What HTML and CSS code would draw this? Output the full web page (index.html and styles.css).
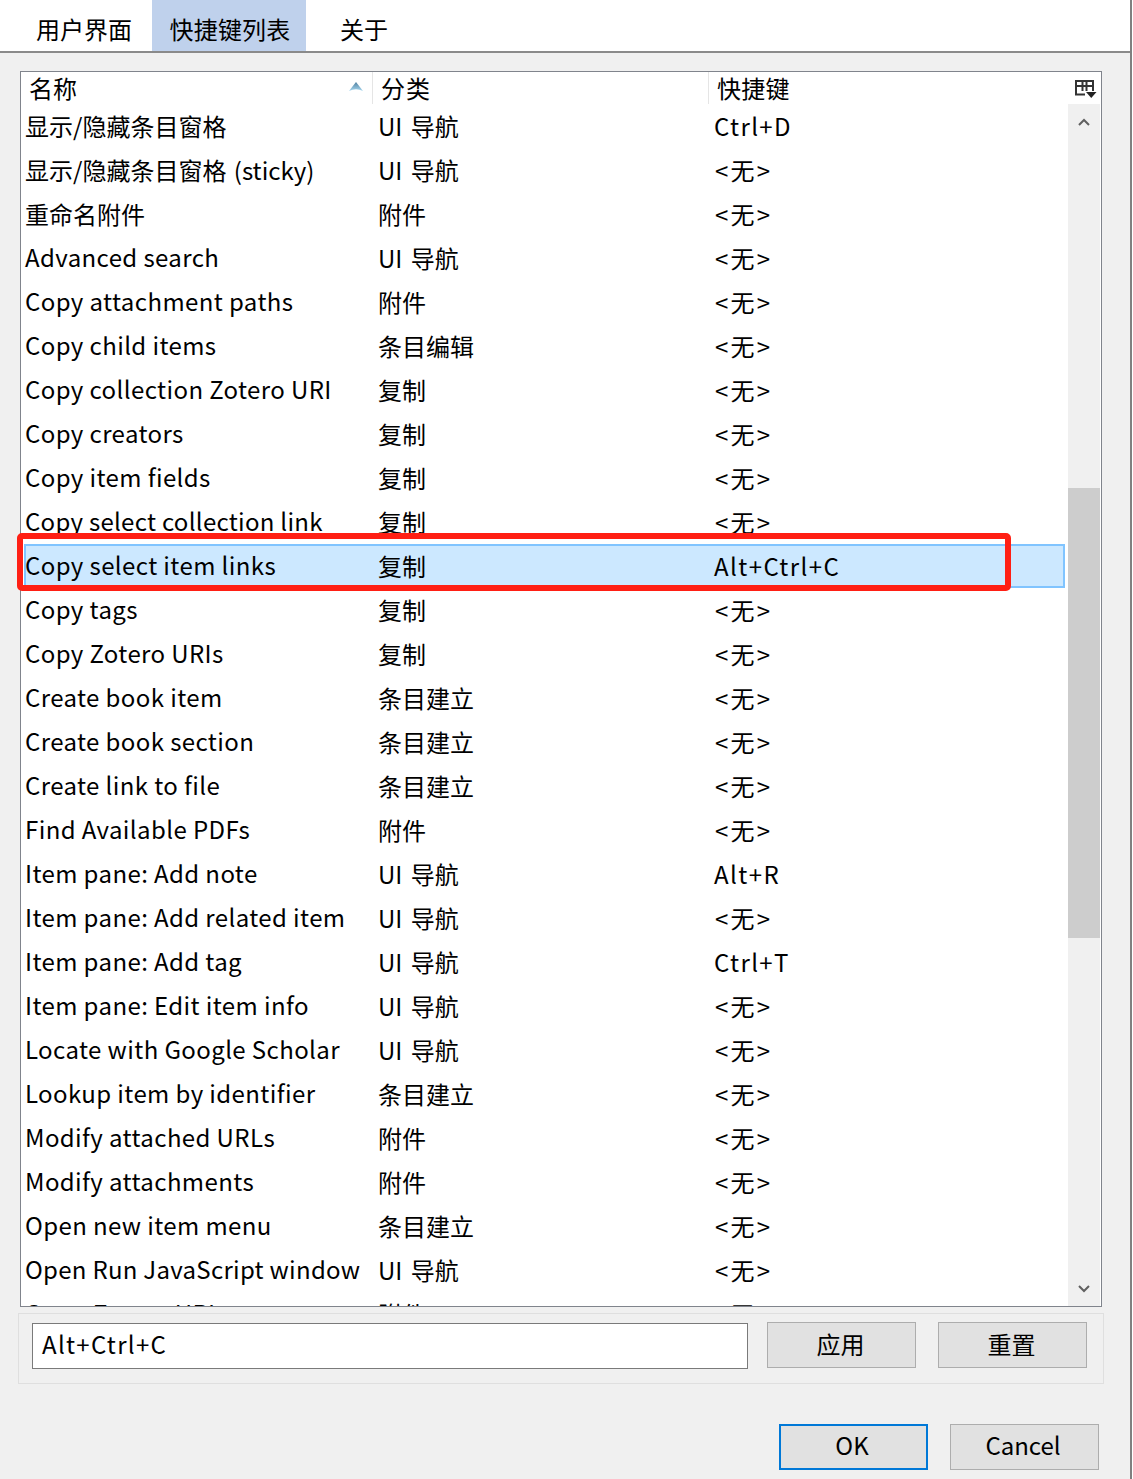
FILE: index.html
```html
<!DOCTYPE html>
<html lang="zh-CN">
<head>
<meta charset="utf-8">
<title>快捷键列表</title>
<link rel="stylesheet" href="styles.css">
</head>
<body>
<div class="app">
  <nav class="tabs">
    <div class="tab tab-first">用户界面</div>
    <div class="tab tab-active">快捷键列表</div>
    <div class="tab tab-last">关于</div>
  </nav>
  <main class="main">
    <section class="list">
      <div class="table">
        <div class="head">
          <div class="hcell hcell-name">名称
            <svg class="sort" width="14" height="9" viewBox="0 0 14 9"><defs><linearGradient id="sortfill" x1="0" y1="0" x2="0" y2="1"><stop offset="0" stop-color="#4f7f9f"/><stop offset="1" stop-color="#a8d8f0"/></linearGradient></defs><path d="M7 0 L14 9 Q7 5.500 0 9 Z" fill="url(#sortfill)"/></svg>
          </div>
          <div class="hcell hcell-cat">分类</div>
          <div class="hcell hcell-key">快捷键</div>
        </div>
        <div class="rows">
          <div class="row"><span class="name zh">显示/隐藏条目窗格</span><span class="cat">UI 导航</span><span class="key">Ctrl+D</span></div>
          <div class="row"><span class="name zh zh-mixed">显示/隐藏条目窗格 (sticky)</span><span class="cat">UI 导航</span><span class="key none">&lt;无&gt;</span></div>
          <div class="row"><span class="name zh">重命名附件</span><span class="cat">附件</span><span class="key none">&lt;无&gt;</span></div>
          <div class="row"><span class="name">Advanced search</span><span class="cat">UI 导航</span><span class="key none">&lt;无&gt;</span></div>
          <div class="row"><span class="name">Copy attachment paths</span><span class="cat">附件</span><span class="key none">&lt;无&gt;</span></div>
          <div class="row"><span class="name">Copy child items</span><span class="cat">条目编辑</span><span class="key none">&lt;无&gt;</span></div>
          <div class="row"><span class="name">Copy collection Zotero URI</span><span class="cat">复制</span><span class="key none">&lt;无&gt;</span></div>
          <div class="row"><span class="name">Copy creators</span><span class="cat">复制</span><span class="key none">&lt;无&gt;</span></div>
          <div class="row"><span class="name">Copy item fields</span><span class="cat">复制</span><span class="key none">&lt;无&gt;</span></div>
          <div class="row"><span class="name tight">Copy select collection link</span><span class="cat">复制</span><span class="key none">&lt;无&gt;</span></div>
          <div class="row row-selected"><span class="name">Copy select item links</span><span class="cat">复制</span><span class="key">Alt+Ctrl+C</span></div>
          <div class="row"><span class="name">Copy tags</span><span class="cat">复制</span><span class="key none">&lt;无&gt;</span></div>
          <div class="row"><span class="name">Copy Zotero URIs</span><span class="cat">复制</span><span class="key none">&lt;无&gt;</span></div>
          <div class="row"><span class="name">Create book item</span><span class="cat">条目建立</span><span class="key none">&lt;无&gt;</span></div>
          <div class="row"><span class="name">Create book section</span><span class="cat">条目建立</span><span class="key none">&lt;无&gt;</span></div>
          <div class="row"><span class="name">Create link to file</span><span class="cat">条目建立</span><span class="key none">&lt;无&gt;</span></div>
          <div class="row"><span class="name">Find Available PDFs</span><span class="cat">附件</span><span class="key none">&lt;无&gt;</span></div>
          <div class="row"><span class="name">Item pane: Add note</span><span class="cat">UI 导航</span><span class="key">Alt+R</span></div>
          <div class="row"><span class="name">Item pane: Add related item</span><span class="cat">UI 导航</span><span class="key none">&lt;无&gt;</span></div>
          <div class="row"><span class="name">Item pane: Add tag</span><span class="cat">UI 导航</span><span class="key">Ctrl+T</span></div>
          <div class="row"><span class="name">Item pane: Edit item info</span><span class="cat">UI 导航</span><span class="key none">&lt;无&gt;</span></div>
          <div class="row"><span class="name">Locate with Google Scholar</span><span class="cat">UI 导航</span><span class="key none">&lt;无&gt;</span></div>
          <div class="row"><span class="name">Lookup item by identifier</span><span class="cat">条目建立</span><span class="key none">&lt;无&gt;</span></div>
          <div class="row"><span class="name">Modify attached URLs</span><span class="cat">附件</span><span class="key none">&lt;无&gt;</span></div>
          <div class="row"><span class="name">Modify attachments</span><span class="cat">附件</span><span class="key none">&lt;无&gt;</span></div>
          <div class="row"><span class="name">Open new item menu</span><span class="cat">条目建立</span><span class="key none">&lt;无&gt;</span></div>
          <div class="row"><span class="name tight">Open Run JavaScript window</span><span class="cat">UI 导航</span><span class="key none">&lt;无&gt;</span></div>
          <div class="row"><span class="name">Open Zotero URIs</span><span class="cat">附件</span><span class="key none">&lt;无&gt;</span></div>
        </div>
      </div>
      <aside class="side">
        <div class="picker">
          <svg width="24" height="22" viewBox="0 0 24 22"><path d="M12 16.500H3V3H20V13M3 8H20M9.500 3V13M13.500 3V13" fill="none" stroke="#333" stroke-width="2"/><path d="M13 14H23.500L18.250 20Z" fill="#222"/></svg>
        </div>
        <div class="scroll">
          <svg class="arrow" width="12" height="8" viewBox="0 0 12 8"><path d="M1 7L6 2L11 7" fill="none" stroke="#606060" stroke-width="2"/></svg>
          <div class="track"><div class="thumb"></div></div>
          <svg class="arrow" width="12" height="8" viewBox="0 0 12 8"><path d="M1 1L6 6L11 1" fill="none" stroke="#606060" stroke-width="2"/></svg>
        </div>
      </aside>
      <div class="highlight"></div>
    </section>
    <section class="group">
      <div class="input">Alt+Ctrl+C</div>
      <div class="btn btn-apply">应用</div>
      <div class="btn btn-reset">重置</div>
    </section>
    <footer class="footer">
      <div class="btn btn-default">OK</div>
      <div class="btn btn-cancel">Cancel</div>
    </footer>
  </main>
</div>
</body>
</html>
```
FILE: styles.css
```css
* { box-sizing: border-box; }
html, body { margin: 0; padding: 0; }
body {
  width: 1133px;
  height: 1479px;
  overflow: hidden;
  background: #fff;
  color: #000;
  font-family: "Noto Sans CJK SC", "Noto Sans", sans-serif;
  font-size: 24px;
  line-height: 32px;
}
.app {
  width: 1132px;
  height: 1479px;
  border-right: 2px solid #808080;
  background: #f0f0f0;
  display: flex;
  flex-direction: column;
}
.tabs {
  height: 53px;
  flex: none;
  display: flex;
  background: #fff;
  border-bottom: 2px solid #8a8a8a;
}
.tab { height: 51px; display: flex; align-items: center; justify-content: center; padding-top: 7px; }
.tab-first { width: 152px; padding-left: 36px; padding-right: 20px; }
.tab-active { width: 154px; background: #bfd1ec; padding-left: 2px; letter-spacing: 0.2px; }
.tab-last { width: 118px; padding-right: 2px; }

.main { flex: 1; padding: 18px 0 0 18px; width: 1104px; display: flex; flex-direction: column; }

.list {
  position: relative;
  margin: 0 2px;
  width: 1082px;
  height: 1236px;
  flex: none;
  border: 1px solid #80848c;
  background: #fff;
  display: flex;
}
.table { width: 1047px; flex: none; display: flex; flex-direction: column; }
.head { height: 32px; flex: none; display: grid; grid-template-columns: 352px 336px 1fr; }
.hcell { height: 32px; padding-left: 8px; position: relative; line-height: 32px; border-right: 1px solid #e5e5e5; }
.hcell-cat { letter-spacing: 1px; }
.hcell-key { border-right: 0; letter-spacing: 0.3px; }
.sort { position: absolute; right: 9px; top: 10px; }
.rows { flex: 1; min-height: 0; overflow: hidden; }
.row {
  height: 44px;
  display: grid;
  grid-template-columns: 353px 335px 1fr;
  align-items: center;
  margin-left: 3px;
  padding: 0 0 2px 1px;
  margin-right: 3px;
  white-space: nowrap;
}
.row-selected { background: #cce8ff; box-shadow: inset 0 0 0 2px #80c4ff; }
.name { letter-spacing: 0.4px; }
.tight { letter-spacing: 0.28px; }
.zh { letter-spacing: 0; padding-top: 2px; }
.zh-mixed { word-spacing: 2px; }
.cat { padding-top: 2px; word-spacing: 3px; }
.key { padding: 2px 0 0 1px; letter-spacing: 1.4px; }
.none { padding-left: 2px; letter-spacing: 2.2px; }
.side { width: 33px; flex: none; display: flex; flex-direction: column; }
.picker { height: 32px; flex: none; display: flex; align-items: center; justify-content: center; padding-left: 1px; padding-top: 2px; margin-right: 1px; }
.scroll { flex: 1; width: 32px; background: #f0f0f0; display: flex; flex-direction: column; align-items: center; padding: 14px 0 13px; }
.track { flex: 1; width: 32px; padding-top: 362px; margin: 0; }
.thumb { height: 450px; background: #cdcdcd; }
.arrow { flex: none; }
.highlight {
  position: absolute;
  left: -4px;
  top: 461px;
  width: 994px;
  height: 58px;
  border: 6px solid #ff1f14;
  border-radius: 5px;
}

.group {
  margin-top: 6px;
  width: 1086px;
  height: 71px;
  flex: none;
  border: 1px solid #dfdfdf;
  padding: 8px 0 0 13px;
  display: flex;
  align-items: flex-start;
}
.input {
  width: 716px;
  height: 46px;
  margin-top: 1px;
  margin-right: 19px;
  border: 1px solid #7a7a7a;
  background: #fff;
  padding-left: 9px;
  line-height: 40px;
  letter-spacing: 1.3px;
}
.btn {
  width: 149px;
  height: 46px;
  flex: none;
  background: #e1e1e1;
  border: 1.500px solid #adadad;
  display: flex;
  align-items: center;
  justify-content: center;
  padding: 0 2px 2px 0;
}
.btn-apply { margin-right: 22px; }
.footer { margin-top: 40px; display: flex; padding-left: 761px; gap: 22px; }
.footer .btn { padding: 0 3px 4px 0; }
.btn-default { border: 2px solid #0078d7; }
```
